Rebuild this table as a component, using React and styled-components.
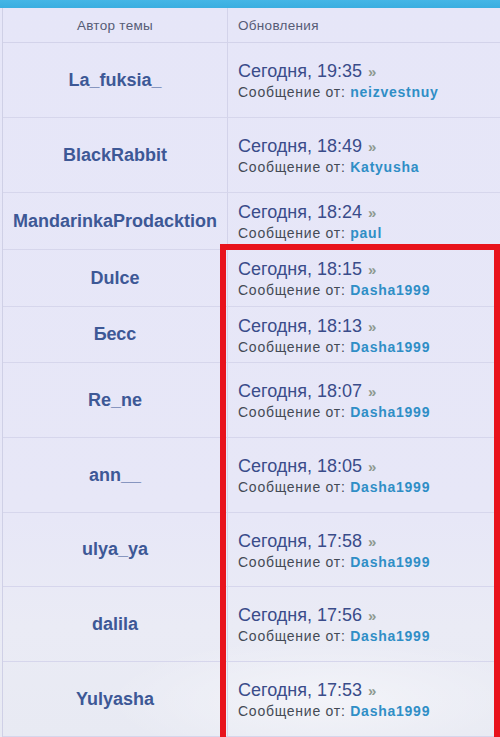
import React from "react";
import styled, { createGlobalStyle } from "styled-components";

const Global = createGlobalStyle`
  html, body { margin: 0; padding: 0; background: #e7e7f7; }
  body { font-family: "Liberation Sans", Arial, sans-serif; }
`;

const Page = styled.div`
  position: relative;
  width: 500px;
  height: 737px;
  overflow: hidden;
  background:
    radial-gradient(ellipse 320px 90px at 330px 700px, rgba(255,255,255,0.45), rgba(255,255,255,0) 70%),
    linear-gradient(180deg, #e6e6f8 0%, #e7e7f7 70%, #eaebf5 85%, #e8eaf3 100%);
`;

const TopBar = styled.div`
  height: 8px;
  background: linear-gradient(180deg, #44b6e6 0%, #3aaee0 100%);
`;

const Table = styled.div`
  display: grid;
  grid-template-columns: 225px 1fr;
  margin-left: 2px;
  border-left: 1px solid #cfd0e6;
`;

const HeadCell = styled.div`
  height: 35px;
  display: flex;
  align-items: center;
  justify-content: ${(p) => (p.$center ? "center" : "flex-start")};
  padding-left: ${(p) => (p.$center ? "0" : "10px")};
  font-size: 13.5px;
  letter-spacing: 0.3px;
  color: #565c76;
  border-bottom: 1px solid #d3d3ea;
  border-right: ${(p) => (p.$center ? "1px solid #d3d3ea" : "none")};
  box-sizing: border-box;
`;

const AuthorCell = styled.div`
  height: ${(p) => p.$h}px;
  display: flex;
  align-items: center;
  justify-content: center;
  font-size: 18px;
  font-weight: bold;
  color: #3d5896;
  border-bottom: 1px solid #d6d6ec;
  border-right: 1px solid #d3d3ea;
  box-sizing: border-box;
`;

const UpdateCell = styled.div`
  height: ${(p) => p.$h}px;
  display: flex;
  flex-direction: column;
  justify-content: center;
  padding-left: 10px;
  border-bottom: 1px solid #d6d6ec;
  box-sizing: border-box;
`;

const Time = styled.div`
  font-size: 18px;
  line-height: 22px;
  color: #3a4c8a;
  display: flex;
  align-items: center;
  gap: 6px;
`;

const Arrow = styled.span`
  font-size: 15px;
  font-weight: bold;
  color: #8e9a90;
  letter-spacing: -2px;
  margin-top: 2px;
`;

const Message = styled.div`
  font-size: 14px;
  line-height: 18px;
  letter-spacing: 0.75px;
  color: #444a55;
`;

const User = styled.span`
  color: #2f8ec6;
  font-weight: bold;
`;

const Highlight = styled.div`
  position: absolute;
  left: 220px;
  top: 244px;
  width: 280px;
  height: 500px;
  border: 6px solid #e8131c;
  box-sizing: border-box;
  pointer-events: none;
`;

const rows = [
  { a: "La_fuksia_", t: "19:35", u: "neizvestnuy", h: 75 },
  { a: "BlackRabbit", t: "18:49", u: "Katyusha", h: 75 },
  { a: "MandarinkaProdacktion", t: "18:24", u: "paul", h: 57 },
  { a: "Dulce", t: "18:15", u: "Dasha1999", h: 57 },
  { a: "Бесс", t: "18:13", u: "Dasha1999", h: 56 },
  { a: "Re_ne", t: "18:07", u: "Dasha1999", h: 75 },
  { a: "ann__", t: "18:05", u: "Dasha1999", h: 75 },
  { a: "ulya_ya", t: "17:58", u: "Dasha1999", h: 74 },
  { a: "dalila", t: "17:56", u: "Dasha1999", h: 75 },
  { a: "Yulyasha", t: "17:53", u: "Dasha1999", h: 75 },
];

export default function App() {
  return (
    <Page>
      <Global />
      <TopBar />
      <Table>
        <HeadCell $center>Автор темы</HeadCell>
        <HeadCell>Обновления</HeadCell>
        {rows.map((r) => (
          <React.Fragment key={r.a}>
            <AuthorCell $h={r.h}>{r.a}</AuthorCell>
            <UpdateCell $h={r.h}>
              <Time>
                Сегодня, {r.t} <Arrow>»</Arrow>
              </Time>
              <Message>
                Сообщение от: <User>{r.u}</User>
              </Message>
            </UpdateCell>
          </React.Fragment>
        ))}
      </Table>
      <Highlight />
    </Page>
  );
}
